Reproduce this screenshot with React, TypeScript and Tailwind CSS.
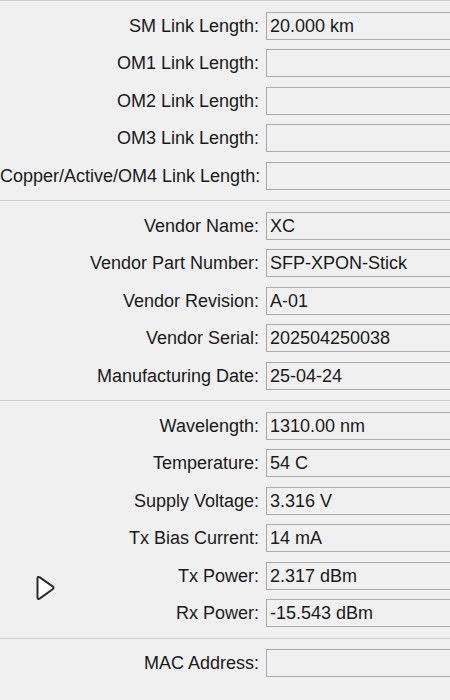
import React from 'react';

type Field = { label: string; value?: string };

const sections: Field[][] = [
  [
    { label: 'SM Link Length:', value: '20.000 km' },
    { label: 'OM1 Link Length:' },
    { label: 'OM2 Link Length:' },
    { label: 'OM3 Link Length:' },
    { label: 'Copper/Active/OM4 Link Length:' },
  ],
  [
    { label: 'Vendor Name:', value: 'XC' },
    { label: 'Vendor Part Number:', value: 'SFP-XPON-Stick' },
    { label: 'Vendor Revision:', value: 'A-01' },
    { label: 'Vendor Serial:', value: '202504250038' },
    { label: 'Manufacturing Date:', value: '25-04-24' },
  ],
  [
    { label: 'Wavelength:', value: '1310.00 nm' },
    { label: 'Temperature:', value: '54 C' },
    { label: 'Supply Voltage:', value: '3.316 V' },
    { label: 'Tx Bias Current:', value: '14 mA' },
    { label: 'Tx Power:', value: '2.317 dBm' },
    { label: 'Rx Power:', value: '-15.543 dBm' },
  ],
  [{ label: 'MAC Address:' }],
];

function Row({ label, value }: Field) {
  return (
    <div className="flex h-[28px] items-center">
      <div className="w-[259px] shrink-0 whitespace-nowrap text-right">{label}</div>
      <div className="ml-[7px] flex h-[28px] w-[220px] shrink-0 items-center border border-[#a9a9a9] bg-[#f0f0f0] pl-[3px] whitespace-nowrap">
        {value}
      </div>
    </div>
  );
}

export default function App() {
  return (
    <div
      className="relative h-[700px] w-[450px] overflow-hidden bg-[#f0f0f0] text-[18px] leading-none text-[#1a1a1a]"
      style={{ fontFamily: '"Liberation Sans", Arial, sans-serif' }}
    >
      {sections.map((rows, i) => (
        <div
          key={i}
          className="flex flex-col gap-[9.5px] border-t border-[#cfcfcf] py-[10.5px]"
        >
          {rows.map((r) => (
            <Row key={r.label} {...r} />
          ))}
        </div>
      ))}

      {/* mouse pointer */}
      <svg
        className="absolute left-[34px] top-[574px]"
        width="22"
        height="28"
        viewBox="0 0 22 28"
      >
        <path
          d="M3.5 4.5 Q3.5 2 5.8 3.4 L18.6 12.4 Q20.4 13.8 18.6 15.2 L6 24.4 Q3.5 26 3.5 23.2 Z"
          fill="#ffffff"
          stroke="#2a2a2a"
          strokeWidth="2"
          strokeLinejoin="round"
        />
      </svg>
    </div>
  );
}
